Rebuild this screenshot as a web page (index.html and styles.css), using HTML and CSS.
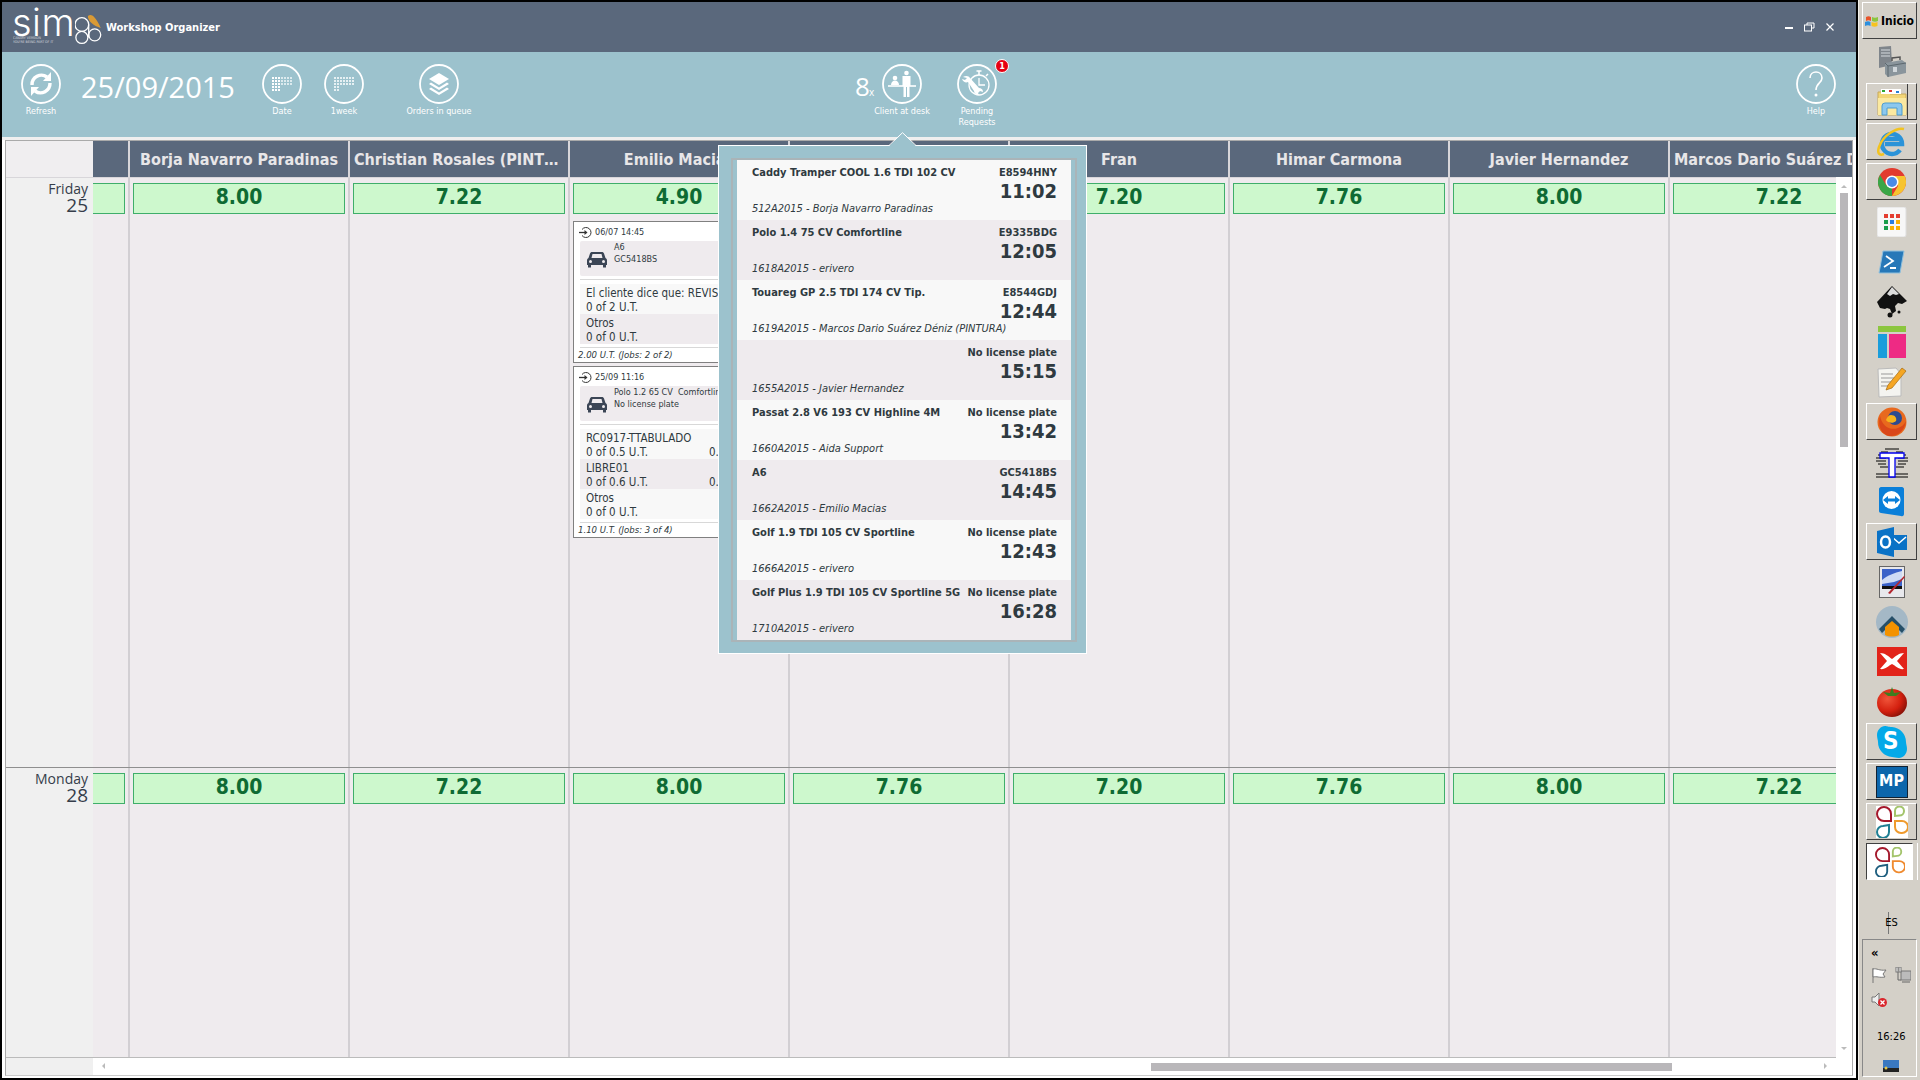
FILE: index.html
```html
<!DOCTYPE html>
<html lang="en">
<head>
    <meta charset="UTF-8">
    <title>Workshop Organizer</title>
    <link rel="stylesheet" href="styles.css">
</head>
<body>

<div class="page">
    <div class="window">
        <header class="titlebar">
            <div class="logo">
                <span class="logo-word">sim</span>
                <svg class="logo-mark" width="36" height="40" viewBox="0 0 36 40" fill="none" stroke="#fff" stroke-width="1.5">
                    <circle cx="8" cy="16" r="8"/>
                    <path d="M16 16v15"/>
                    <circle cx="8" cy="31" r="7"/>
                    <circle cx="23" cy="28" r="7"/>
                    <path d="M15 6c3-2 5-1 7 1 3 3 6 8 8 13-4-1-8-3-11-6-2-2-4-5-4-8z" fill="#d99a35" stroke="none"/>
                </svg>
                <span class="logo-small">CANARY VERSION<br>YOU'RE BEING PART OF IT</span>
            </div>
            <span class="app-name">Workshop Organizer</span>
            <div class="window-controls">
                <svg width="8" height="3" viewBox="0 0 8 3"><rect width="8" height="2" y="1" fill="#fff"/></svg>
                <svg width="11" height="10" viewBox="0 0 11 10" fill="none" stroke="#fff"><rect x="0.5" y="3" width="7" height="6"/><path d="M3 3V1h7v5H8" /></svg>
                <svg width="8" height="8" viewBox="0 0 8 8" stroke="#fff" stroke-width="1.2"><path d="M0.5 0.5l7 7M7.5 0.5l-7 7"/></svg>
            </div>
        </header>

        <div class="toolbar">
            <div class="tool tool-refresh">
                <svg class="tool-icon" viewBox="0 0 40 40" fill="none" stroke="#fff">
                    <circle cx="20" cy="20" r="19" stroke-width="1.8"/>
                    <path d="M11 21a9.5 9.5 0 0 1 15-8" stroke-width="3.4"/>
                    <path d="M29 19a9.5 9.5 0 0 1-15 8" stroke-width="3.4"/>
                    <path d="M30 8v9h-8z" fill="#fff" stroke="none"/>
                    <path d="M10 32v-9h8z" fill="#fff" stroke="none"/>
                </svg>
                <span class="tool-label">Refresh</span>
            </div>
            <div class="date-text">25/09/2015</div>
            <div class="tool tool-date">
                <svg class="tool-icon" viewBox="0 0 40 40" fill="none">
                    <defs>
                        <pattern id="dots" width="3" height="3" patternUnits="userSpaceOnUse" x="10" y="13">
                            <rect width="2" height="2" fill="#fff"/>
                        </pattern>
                    </defs>
                    <circle cx="20" cy="20" r="19" stroke="#fff" stroke-width="1.8"/>
                    <rect x="10" y="13" width="21" height="9" fill="url(#dots)"/>
                    <rect x="10" y="22" width="9" height="5" fill="url(#dots)"/>
                    <rect x="19" y="13" width="12" height="9" fill="#9cc2cd" opacity="0.35"/>
                </svg>
                <span class="tool-label">Date</span>
            </div>
            <div class="tool tool-date">
                <svg class="tool-icon" viewBox="0 0 40 40" fill="none">
                    <circle cx="20" cy="20" r="19" stroke="#fff" stroke-width="1.8"/>
                    <rect x="10" y="13" width="21" height="9" fill="url(#dots)" opacity="0.75"/>
                    <rect x="10" y="22" width="6" height="5" fill="url(#dots)" opacity="0.75"/>
                </svg>
                <span class="tool-label">1week</span>
            </div>
            <div class="tool tool-orders">
                <svg class="tool-icon" viewBox="0 0 40 40" fill="none">
                    <circle cx="20" cy="20" r="19" stroke="#fff" stroke-width="1.8"/>
                    <path d="M20 9l10 6-10 6-10-6z" fill="#fff"/>
                    <path d="M12 18.500l8 5 8-5 2 1.500-10 6-10-6z" fill="#fff"/>
                    <path d="M12 23.500l8 5 8-5 2 1.500-10 6-10-6z" fill="#fff"/>
                </svg>
                <span class="tool-label">Orders in queue</span>
            </div>
            <div class="client-count">8<small>x</small></div>
            <div class="tool tool-client">
                <svg class="tool-icon" viewBox="0 0 40 40" fill="none">
                    <circle cx="20" cy="20" r="19" stroke="#fff" stroke-width="1.8"/>
                    <circle cx="24.500" cy="9" r="2.300" fill="#fff"/>
                    <path d="M20.500 12h8v10h-1v11h-2.500v-10h-1v10h-2.500v-11h-1z" fill="#fff"/>
                    <circle cx="13" cy="14" r="2.300" fill="#fff"/>
                    <path d="M9 21c0-3 2-4.500 4-4.500s4 1.500 4 4.500z" fill="#fff"/>
                    <path d="M6 22h28" stroke="#fff" stroke-width="1.600"/>
                </svg>
                <span class="tool-label">Client at desk</span>
            </div>
            <div class="tool tool-pending">
                <svg class="tool-icon" viewBox="0 0 40 40" fill="none" stroke="#fff">
                    <circle cx="20" cy="20" r="19" stroke-width="1.8"/>
                    <circle cx="22" cy="21" r="10" stroke-width="1.300"/>
                    <path d="M22 7v4M19.500 7h5M31 10l-2 2" stroke-width="1.500"/>
                    <path d="M22 14v7h6" stroke-width="1.300"/>
                    <path d="M6 13c3-2 6-1 7 1l9 10c2 0 4 1 4 4l-3-1-2 2 1 2c-3 0-5-2-5-4L11 18c-2 1-5 0-6-3l3 1 2-2z" fill="#fff" stroke="none"/>
                </svg>
                <span class="tool-label">Pending<br>Requests</span>
                <span class="badge">1</span>
            </div>
            <div class="tool tool-help">
                <svg class="tool-icon" viewBox="0 0 40 40" fill="none" stroke="#fff">
                    <circle cx="20" cy="20" r="19" stroke-width="1.8"/>
                    <path d="M14 14c0-4 3-6 6-6s6 2 6 6c0 5-6 5-6 12" stroke-width="1.600"/>
                    <circle cx="20" cy="31" r="1.500" fill="#fff" stroke="none"/>
                </svg>
                <span class="tool-label">Help</span>
            </div>
        </div>

        <div class="panel">
            <div class="grid">
                <div class="grid-head">
                    <div class="corner"></div>
                    <div class="head-stub"></div>
                    <div class="head-cell">Borja Navarro Paradinas</div>
                    <div class="head-cell">Christian Rosales (PINTURA)</div>
                    <div class="head-cell">Emilio Macias</div>
                    <div class="head-cell">Aida Support</div>
                    <div class="head-cell">Fran</div>
                    <div class="head-cell">Himar Carmona</div>
                    <div class="head-cell">Javier Hernandez</div>
                    <div class="head-cell">Marcos Dario Suárez Déniz (PINTURA)</div>
                </div>

                <div class="grid-main">
                    <div class="days">
                        <div class="day-row day-first">
                            <div class="day-label"><span class="day-name">Friday</span><span class="day-num">25</span></div>
                            <div class="col col-stub"><div class="hours"></div></div>
                            <div class="col"><div class="hours">8.00</div></div>
                            <div class="col"><div class="hours">7.22</div></div>
                            <div class="col">
                                <div class="hours">4.90</div>

                                <div class="card">
                                    <div class="card-head">
                                        <svg width="13" height="13" viewBox="0 0 13 13" fill="none" stroke="#333"><path d="M3 3.500a5 5 0 1 1 0 6"/><path d="M0 6.500h7.500" stroke-width="1.300"/><path d="M5.500 4l3 2.500-3 2.500z" fill="#333" stroke="none"/></svg>
                                        <span>06/07 14:45</span>
                                        <span class="card-clock"></span>
                                    </div>
                                    <div class="card-car">
                                        <svg class="car-icon" width="20" height="17" viewBox="0 0 20 17"><path d="M5 1h10c1 0 1.500.5 2 1.500L18.500 7c1 .5 1.500 1.500 1.500 2.500V14h-1v2.500h-3V14H4v2.500H1V14H0V9.500C0 8.500.5 7.500 1.500 7L3 2.500C3.500 1.500 4 1 5 1z" fill="#3b4555"/><path d="M4.500 7l1-4h9l1 4z" fill="#efebee"/><circle cx="3.500" cy="10.500" r="1.500" fill="#efebee"/><circle cx="16.500" cy="10.500" r="1.500" fill="#efebee"/></svg>
                                        <div class="car-text">A6<br>GC5418BS</div>
                                    </div>
                                    <div class="card-jobs">
                                        <div class="job">El cliente dice que: REVISAR<br>0 of 2 U.T.</div>
                                        <div class="job job-alt">Otros<br>0 of 0 U.T.</div>
                                    </div>
                                    <div class="card-foot">2.00 U.T. (Jobs: 2 of 2)</div>
                                </div>

                                <div class="card">
                                    <div class="card-head">
                                        <svg width="13" height="13" viewBox="0 0 13 13" fill="none" stroke="#333"><path d="M3 3.500a5 5 0 1 1 0 6"/><path d="M0 6.500h7.500" stroke-width="1.300"/><path d="M5.500 4l3 2.500-3 2.500z" fill="#333" stroke="none"/></svg>
                                        <span>25/09 11:16</span>
                                        <span class="card-clock"></span>
                                    </div>
                                    <div class="card-car">
                                        <svg class="car-icon" width="20" height="17" viewBox="0 0 20 17"><path d="M5 1h10c1 0 1.500.5 2 1.500L18.500 7c1 .5 1.500 1.500 1.500 2.500V14h-1v2.500h-3V14H4v2.500H1V14H0V9.500C0 8.500.5 7.500 1.500 7L3 2.500C3.500 1.500 4 1 5 1z" fill="#3b4555"/><path d="M4.500 7l1-4h9l1 4z" fill="#efebee"/><circle cx="3.500" cy="10.500" r="1.500" fill="#efebee"/><circle cx="16.500" cy="10.500" r="1.500" fill="#efebee"/></svg>
                                        <div class="car-text">Polo 1.2 65 CV&nbsp; Comfortline<br>No license plate</div>
                                    </div>
                                    <div class="card-jobs">
                                        <div class="job">RC0917-TTABULADO<br><span class="job-line">0 of 0.5 U.T.<span class="job-right">0.50</span></span></div>
                                        <div class="job job-alt">LIBRE01<br><span class="job-line">0 of 0.6 U.T.<span class="job-right">0.60</span></span></div>
                                        <div class="job">Otros<br>0 of 0 U.T.</div>
                                    </div>
                                    <div class="card-foot">1.10 U.T. (Jobs: 3 of 4)</div>
                                </div>
                            </div>
                            <div class="col"><div class="hours">7.76</div></div>
                            <div class="col"><div class="hours">7.20</div></div>
                            <div class="col"><div class="hours">7.76</div></div>
                            <div class="col"><div class="hours">8.00</div></div>
                            <div class="col"><div class="hours">7.22</div></div>
                        </div>
                        <div class="day-row day-second">
                            <div class="day-label"><span class="day-name">Monday</span><span class="day-num">28</span></div>
                            <div class="col col-stub"><div class="hours"></div></div>
                            <div class="col"><div class="hours">8.00</div></div>
                            <div class="col"><div class="hours">7.22</div></div>
                            <div class="col"><div class="hours">8.00</div></div>
                            <div class="col"><div class="hours">7.76</div></div>
                            <div class="col"><div class="hours">7.20</div></div>
                            <div class="col"><div class="hours">7.76</div></div>
                            <div class="col"><div class="hours">8.00</div></div>
                            <div class="col"><div class="hours">7.22</div></div>
                        </div>
                    </div>
                    <div class="vscroll">
                        <span class="arrow-up"></span>
                        <div class="vscroll-thumb"></div>
                        <span class="arrow-down"></span>
                    </div>
                </div>

                <div class="hscroll">
                    <div class="hscroll-corner"></div>
                    <span class="arrow-left"></span>
                    <div class="hscroll-thumb"></div>
                    <span class="arrow-right"></span>
                </div>
            </div>
        </div>
    </div>

    <aside class="taskbar">
        <div class="start-btn">
            <svg width="14" height="14" viewBox="0 0 14 14"><path d="M1 3c2-1 3-1 5 0v4C4 6 3 6 1 7z" fill="#e8542a"/><path d="M7 3c2 1 4 1 6 0v4c-2 1-4 1-6 0z" fill="#8cc63f"/><path d="M0 8c2-1 4-1 5.500 0v4C4 11 2 11 0 12z" fill="#2d8fdd"/><path d="M6.500 8c2 1 4 1 6 0v4c-2 1-4 1-6 0z" fill="#f7c31e"/></svg>
            <span>Inicio</span>
        </div>

        <div class="tb-item">
            <svg width="30" height="32" viewBox="0 0 30 32"><path d="M2 1l12-1 1 19-13 3z" fill="#7f858b"/><path d="M4 4h9M4 7h9M4 10h9" stroke="#d6dade"/><path d="M8 17l17-3 4 3v10L11 31l-3-3z" fill="#8a959c"/><path d="M8 17l3 3 18-3M11 20v11" fill="none" stroke="#5d686f"/><path d="M15 15v-3l8-1v3" fill="none" stroke="#555" stroke-width="1.500"/><rect x="16" y="21" width="4" height="5" fill="#d0d6da"/></svg>
        </div>
        <div class="tb-item tb-raised tb-group">
            <svg width="30" height="29" viewBox="0 0 30 29"><path d="M1 5h10l2 2h16v21H1z" fill="#f3d677" stroke="#c8a95a"/><rect x="4" y="2" width="20" height="5" fill="#fff"/><rect x="5" y="3" width="3" height="2" fill="#2fa82f"/><rect x="12" y="3" width="3" height="2" fill="#d33"/><rect x="19" y="4" width="3" height="2" fill="#2b7fd6"/><path d="M1 11h28v17H1z" fill="#fbe9a0"/><path d="M5 28v-9a3 3 0 0 1 3-3h14a3 3 0 0 1 3 3v9h-5v-7h-10v7z" fill="#8cc8ee" stroke="#4f9dcf"/></svg>
        </div>
        <div class="tb-item tb-raised">
            <svg width="30" height="30" viewBox="0 0 30 30" fill="none"><path d="M8 17h17a10 10 0 1 0-2 6" stroke="#2b93d8" stroke-width="4.500"/><path d="M7 12h15" stroke="#2b93d8" stroke-width="4"/><path d="M27 2C20 0 6 8 2 20c-2 6 0 9 5 7" stroke="#f2c320" stroke-width="2.500"/></svg>
        </div>
        <div class="tb-item tb-raised">
            <svg width="28" height="28" viewBox="0 0 28 28"><circle cx="14" cy="14" r="14" fill="#e23b2e"/><path d="M14 14L1.900 21A14 14 0 0 0 14 28z" fill="#3aa648"/><path d="M1.900 21A14 14 0 0 1 2 7l6 10 6 11A14 14 0 0 1 1.900 21z" fill="#3aa648"/><path d="M14 8h12.700A14 14 0 0 1 14 28l6-10z" fill="#f7c42e"/><circle cx="14" cy="14" r="6.500" fill="#fff"/><circle cx="14" cy="14" r="5" fill="#4a8be8"/></svg>
        </div>
        <div class="tb-item">
            <svg width="30" height="30" viewBox="0 0 30 30"><rect width="29" height="30" rx="2" fill="#f7f7f7" stroke="#ddd"/><rect x="7" y="7" width="4" height="4" fill="#e43d30"/><rect x="13" y="7" width="4" height="4" fill="#e43d30"/><rect x="19" y="7" width="4" height="4" fill="#e43d30"/><rect x="7" y="13" width="4" height="4" fill="#1b9e4b"/><rect x="13" y="13" width="4" height="4" fill="#2a7de1"/><rect x="19" y="13" width="4" height="4" fill="#fbb003"/><rect x="7" y="19" width="4" height="4" fill="#1b9e4b"/><rect x="13" y="19" width="4" height="4" fill="#fbb003"/><rect x="19" y="19" width="4" height="4" fill="#fbb003"/></svg>
        </div>
        <div class="tb-item">
            <svg width="27" height="24" viewBox="0 0 27 24"><path d="M5 1h21l-4 22H1z" fill="#2778b8" stroke="#8fc0de"/><path d="M8 6l7 5-9 6M12 18h6" fill="none" stroke="#fff" stroke-width="1.800"/></svg>
        </div>
        <div class="tb-item">
            <svg width="30" height="32" viewBox="0 0 30 32"><path d="M15 0L30 15l-5 3-4-1-3 3 1 5-4 3-2-5-3-1-2 1-5-1-3-6z" fill="#111"/><path d="M15 1l7 7-3 1-3-1-3 2-3-2z" fill="#dcdcdc"/><circle cx="13" cy="29" r="2.500" fill="#111"/><circle cx="22" cy="26" r="1.500" fill="#111"/></svg>
        </div>
        <div class="tb-item">
            <svg width="28" height="32" viewBox="0 0 28 32"><rect width="28" height="6" fill="#8cc63f"/><rect y="8" width="9" height="24" fill="#1a9ddb"/><rect x="11" y="8" width="17" height="24" fill="#ee2a84"/></svg>
        </div>
        <div class="tb-item">
            <svg width="30" height="32" viewBox="0 0 30 32"><path d="M1 3l18-1 5 6v22L2 31z" fill="#f4f4f0" stroke="#bbb"/><path d="M4 8h12M4 12h14M4 16h10M4 20h8" stroke="#999"/><path d="M9 24l2-5L25 2l4 3-14 17z" fill="#f5a623" stroke="#a36a12" stroke-width=".7"/></svg>
        </div>
        <div class="tb-item tb-raised">
            <svg width="30" height="30" viewBox="0 0 30 30"><circle cx="15" cy="15" r="14.500" fill="#e8691e"/><circle cx="18" cy="11" r="7" fill="#2c4a8f"/><path d="M3 9c2 10 10 15 18 12 3-1 6-3 8-7-1 9-8 15-15 15C6 29 0 21 3 9z" fill="#d9471a"/><path d="M14 8c4 0 6 3 5 6-3 3-8 2-10-1 1-3 3-5 5-5z" fill="#f7b21b"/></svg>
        </div>
        <div class="tb-item">
            <svg width="32" height="32" viewBox="0 0 32 32" fill="none"><g stroke="#000"><path d="M9 3h14M5 6h7M20 6h7M2 9h8M22 9h8M0 12h10M22 12h10M0 15h10M22 15h10M2 18h8M22 18h8M4 21h8M20 21h8M0 28h32M0 31h32"/></g><path d="M4 7h24v5H19v19h-6V12H4z" fill="#fff" stroke="#0000ee" stroke-width="1.300"/></svg>
        </div>
        <div class="tb-item">
            <svg width="25" height="31" viewBox="0 0 25 31"><path d="M2 1h21c1 0 2 1 2 2v25c0 1-1 3-3 2L2 27c-1 0-2-1-2-2V3c0-1 1-2 2-2z" fill="#0a7fd9"/><circle cx="12.500" cy="14" r="9" fill="#fff"/><path d="M4 14l5-4v2.500h7V10l5 4-5 4v-2.500H9V18z" fill="#0a7fd9"/></svg>
        </div>
        <div class="tb-item tb-raised">
            <svg width="30" height="30" viewBox="0 0 30 30"><rect x="14" y="8" width="16" height="15" fill="#0a72c6"/><path d="M15 10l7 6 7-6" fill="none" stroke="#fff" stroke-width="1.500"/><path d="M0 4l17-4v30L0 26z" fill="#0a72c6"/><ellipse cx="8.500" cy="15" rx="4.500" ry="5.500" fill="none" stroke="#fff" stroke-width="2.500"/></svg>
        </div>
        <div class="tb-item">
            <svg width="26" height="32" viewBox="0 0 26 32"><rect x=".5" y=".5" width="25" height="31" fill="#e8e8ec" stroke="#666"/><rect x="3" y="3" width="20" height="17" fill="#3a62c8"/><path d="M3 14c6-5 12-7 20-9v8l-8 3-12 2z" fill="#cfdcf5"/><rect x="3" y="20" width="20" height="3" fill="#111"/><path d="M9 27L25 10l1 1-15 17z" fill="#b3262e"/></svg>
        </div>
        <div class="tb-item">
            <svg width="32" height="32" viewBox="0 0 32 32"><circle cx="16" cy="16" r="16" fill="#a4b8c6"/><path d="M3 23L16 10l13 13-3 4-10-10-10 10z" fill="#264f68"/><path d="M9 21l7-6 7 6v8c-4 2-10 2-14 0z" fill="#f39200"/></svg>
        </div>
        <div class="tb-item">
            <svg width="30" height="29" viewBox="0 0 30 29"><rect width="30" height="29" fill="#e2231a"/><path d="M3 6c5 0 8 3 12 6 4-3 7-6 12-6l-7 8 7 8c-5 1-8-3-12-5-4 2-7 6-12 5l7-8z" fill="#fff"/></svg>
        </div>
        <div class="tb-item">
            <svg width="30" height="31" viewBox="0 0 30 31"><defs><radialGradient id="tomato" cx="0.35" cy="0.35" r="0.75"><stop offset="0" stop-color="#f0553a"/><stop offset="0.6" stop-color="#d4200f"/><stop offset="1" stop-color="#7d0f06"/></radialGradient></defs><ellipse cx="15" cy="17" rx="15" ry="14" fill="url(#tomato)"/><path d="M6 6l7 1 2-6 2 6 7-1-5 4h-8z" fill="#3f7d1f"/></svg>
        </div>
        <div class="tb-item tb-raised">
            <svg width="30" height="32" viewBox="0 0 30 32"><path d="M8 0c2 0 3 1 7 1a15 15 0 0 1 14 15c0 2 1 4 1 7 0 5-4 9-8 9-3 0-5-1-7-1A15 15 0 0 1 1 16c0-2-1-4-1-7 0-5 4-9 8-9z" fill="#03a9e8"/></svg>
            <span class="skype-s">S</span>
        </div>
        <div class="tb-item tb-raised">
            <div class="mp-tile">MP</div>
        </div>
        <div class="tb-item tb-raised">
            <div class="petal-tile">
                <svg width="32" height="32" viewBox="0 0 32 32" fill="none" stroke-width="2"><path d="M15 15H8a7 7 0 1 1 7-7z" stroke="#a4182b"/><path d="M19 10V5a4.500 4.500 0 1 1 4.500 4.500z" stroke="#a3c46b"/><path d="M13 19v7a6 6 0 1 1-6-6z" stroke="#1f7f93"/><path d="M19 15h7a6 6 0 0 1 0 12h-1a6 6 0 0 1-6-6z" stroke="#ef9b2e"/></svg>
            </div>
        </div>
        <div class="tb-item tb-pressed">
            <svg width="30" height="30" viewBox="0 0 32 32" fill="none" stroke-width="2"><path d="M15 15H8a7 7 0 1 1 7-7z" stroke="#a4182b"/><path d="M19 10V5a4.500 4.500 0 1 1 4.500 4.500z" stroke="#a3c46b"/><path d="M13 19v7a6 6 0 1 1-6-6z" stroke="#1f5f7f"/><path d="M19 15h7a6 6 0 0 1 0 12h-1a6 6 0 0 1-6-6z" stroke="#ef8a2e"/></svg>
        </div>

        <div class="lang">
            <span class="lang-text">ES</span>
        </div>

        <div class="tray">
            <span class="tray-more">«</span>
            <div class="tray-icons">
                <svg width="16" height="16" viewBox="0 0 16 16" fill="#fff" stroke="#777"><path d="M2 1v15" fill="none"/><path d="M2 2c4-1 6 2 13 1l-3 4 2 3c-6 1-8-1-12 0z"/></svg>
                <svg width="16" height="16" viewBox="0 0 16 16"><rect x="6" y="4" width="10" height="9" fill="#bbb" stroke="#777"/><rect x="1" y="0" width="2" height="5" fill="#fff" stroke="#777"/><rect x="4" y="0" width="2" height="5" fill="#fff" stroke="#777"/><path d="M3 5v8h3M7 15h8" fill="none" stroke="#666"/></svg>
            </div>
            <svg class="tray-sound" width="17" height="16" viewBox="0 0 17 16"><path d="M1 5h3l4-4v13L4 10H1z" fill="#eee" stroke="#777"/><circle cx="11.500" cy="10.500" r="4.500" fill="#d9262c"/><path d="M9.500 8.500l4 4M13.500 8.500l-4 4" stroke="#fff" stroke-width="1.300"/></svg>
            <span class="tray-clock">16:26</span>
            <svg class="tray-desktop" width="16" height="12" viewBox="0 0 16 12"><rect width="16" height="12" fill="#3a78c0"/><rect y="8" width="16" height="4" fill="#222"/><circle cx="3" cy="8" r="1.500" fill="#e6c84a"/></svg>
        </div>
    </aside>

    <div class="popup">
        <svg class="popup-arrow" width="27" height="14" viewBox="0 0 27 14"><path d="M0 14L13.500 1 27 14z" fill="#9cc2cd"/><path d="M0 13.500L13.500.7 27 13.500" fill="none" stroke="#fff"/></svg>
        <div class="queue">
            <div class="q-row">
                <div class="q-top"><span>Caddy Tramper COOL 1.6 TDI 102 CV</span><span>E8594HNY</span></div>
                <div class="q-time">11:02</div>
                <div class="q-foot">512A2015 - Borja Navarro Paradinas</div>
            </div>
            <div class="q-row">
                <div class="q-top"><span>Polo 1.4 75 CV Comfortline</span><span>E9335BDG</span></div>
                <div class="q-time">12:05</div>
                <div class="q-foot">1618A2015 - erivero</div>
            </div>
            <div class="q-row">
                <div class="q-top"><span>Touareg GP 2.5 TDI 174 CV Tip.</span><span>E8544GDJ</span></div>
                <div class="q-time">12:44</div>
                <div class="q-foot">1619A2015 - Marcos Dario Suárez Déniz (PINTURA)</div>
            </div>
            <div class="q-row">
                <div class="q-top"><span></span><span>No license plate</span></div>
                <div class="q-time">15:15</div>
                <div class="q-foot">1655A2015 - Javier Hernandez</div>
            </div>
            <div class="q-row">
                <div class="q-top"><span>Passat 2.8 V6 193 CV Highline 4M</span><span>No license plate</span></div>
                <div class="q-time">13:42</div>
                <div class="q-foot">1660A2015 - Aida Support</div>
            </div>
            <div class="q-row">
                <div class="q-top"><span>A6</span><span>GC5418BS</span></div>
                <div class="q-time">14:45</div>
                <div class="q-foot">1662A2015 - Emilio Macias</div>
            </div>
            <div class="q-row">
                <div class="q-top"><span>Golf 1.9 TDI 105 CV Sportline</span><span>No license plate</span></div>
                <div class="q-time">12:43</div>
                <div class="q-foot">1666A2015 - erivero</div>
            </div>
            <div class="q-row">
                <div class="q-top"><span>Golf Plus 1.9 TDI 105 CV Sportline 5G</span><span>No license plate</span></div>
                <div class="q-time">16:28</div>
                <div class="q-foot">1710A2015 - erivero</div>
            </div>
        </div>
    </div>
</div>

</body>
</html>
```

FILE: styles.css
```css
/* Global */
* {
    box-sizing: border-box;
}

body {
    margin: 0;
    background: #000;
    font-family: "DejaVu Sans Condensed", "DejaVu Sans", sans-serif;
    color: #2f3a40;
    overflow: hidden;
}

.page {
    position: relative;
    display: flex;
    width: 1920px;
    height: 1080px;
    overflow: hidden;
}

/* Main window */
.window {
    display: flex;
    flex-direction: column;
    width: 1854px;
    height: 1076px;
    margin: 2px 2px 2px 2px;
    background: #fff;
}

.titlebar {
    display: flex;
    align-items: center;
    flex: 0 0 50px;
    padding-left: 10px;
    background: #5a687c;
    color: #fff;
}

.logo {
    position: relative;
    display: flex;
    flex: none;
    width: 94px;
    height: 50px;
}

.logo-word {
    flex: 0 0 58px;
    height: 32px;
    margin-top: 4px;
    font-family: Inter, sans-serif;
    font-weight: 300;
    font-size: 38px;
    letter-spacing: 0.5px;
    line-height: 32px;
}

.logo-mark {
    margin-top: 6px;
}

.logo-small {
    position: absolute;
    left: 1px;
    top: 34px;
    font-size: 3.5px;
    line-height: 4px;
    opacity: 0.7;
}

.app-name {
    font-weight: bold;
    font-size: 11px;
}

.window-controls {
    display: flex;
    align-items: center;
    gap: 11px;
    margin-left: auto;
    margin-right: 22px;
}

/* Toolbar */
.toolbar {
    display: flex;
    flex: 0 0 85px;
    padding-top: 12px;
    background: #9cc2cd;
    color: #fff;
}

.tool {
    position: relative;
    display: flex;
    flex-direction: column;
    align-items: center;
    flex: none;
}

.tool-icon {
    width: 40px;
    height: 40px;
    margin-bottom: 2px;
}

.tool-label {
    font-size: 9px;
    line-height: 11px;
    text-align: center;
    white-space: nowrap;
}

.tool-refresh {
    width: 60px;
    margin-left: 9px;
}

.date-text {
    width: 170px;
    margin-left: 10px;
    padding-top: 4px;
    font-family: "Open Sans", sans-serif;
    font-size: 29px;
    line-height: 38px;
}

.tool-date {
    width: 62px;
}

.tool-orders {
    width: 80px;
    margin-left: 24px;
}

.client-count {
    width: 20px;
    margin-left: 376px;
    padding-top: 7px;
    font-family: "Open Sans", sans-serif;
    font-size: 26px;
    line-height: 30px;
    white-space: nowrap;
}

.client-count small {
    margin-left: -1px;
    font-size: 10px;
}

.tool-client {
    width: 54px;
}

.tool-pending {
    width: 60px;
    margin-left: 18px;
}

.badge {
    position: absolute;
    left: 48px;
    top: -5px;
    width: 14px;
    height: 14px;
    border: 1px solid #fff;
    border-radius: 50%;
    background: #e60012;
    font-weight: bold;
    font-size: 9px;
    line-height: 12px;
    text-align: center;
}

.tool-help {
    width: 40px;
    margin-left: auto;
    margin-right: 20px;
}

/* Grid */
.panel {
    flex: 1;
    min-height: 0;
    padding: 0 3px 2px;
    border-top: 3px solid #efefef;
}

.grid {
    display: flex;
    flex-direction: column;
    height: 100%;
    border: 1px solid #aaa;
    border-bottom-color: #ccc;
    background: #fff;
}

.grid-head {
    display: flex;
    flex: 0 0 36px;
    overflow: hidden;
    background: #5a687c;
}

.corner {
    flex: 0 0 87px;
    background: #f0eef0;
}

.head-stub {
    flex: 0 0 37px;
    border-right: 2px solid #d8d6da;
}

.head-cell {
    flex: 0 0 220px;
    overflow: hidden;
    padding: 0 4px;
    border-right: 2px solid #d8d6da;
    color: #e8e6e8;
    font-weight: bold;
    font-size: 16px;
    line-height: 38px;
    text-align: center;
    white-space: nowrap;
    text-overflow: ellipsis;
}

.head-cell:last-child {
    text-overflow: clip;
}

.grid-main {
    display: flex;
    flex: 0 0 881px;
    min-height: 0;
}

.days {
    display: flex;
    flex-direction: column;
    width: 1830px;
    overflow: hidden;
    border-bottom: 1px solid #bbb;
    border-top: 1px solid #d8d6da;
}

.day-row {
    display: flex;
    flex: none;
    background: #efebee;
}

.day-first {
    height: 590px;
    border-bottom: 1px solid #8f8f8f;
}

.day-second {
    flex: 1;
}

.day-label {
    display: flex;
    flex-direction: column;
    align-items: flex-end;
    flex: 0 0 87px;
    padding: 3px 5px 0 0;
    background: #f0f0f0;
    color: #353d4a;
    font-family: "Open Sans", sans-serif;
}

.day-name {
    font-size: 14px;
    line-height: 16px;
}

.day-num {
    font-size: 19px;
    line-height: 17px;
}

.col {
    flex: 0 0 220px;
    padding: 5px 3px 0;
    border-right: 2px solid #d2cfd3;
}

.col-stub {
    flex: 0 0 37px;
    padding-left: 0;
}

.hours {
    height: 31px;
    border: 1px solid #3fae6a;
    background: #cdf8cd;
    color: #0e6b33;
    font-weight: bold;
    font-size: 21px;
    line-height: 26px;
    text-align: center;
}

.col-stub .hours {
    border-left: 0;
}

/* Work order cards */
.card {
    margin-top: 3px;
    padding: 0 6px;
    border: 1px solid #808080;
    background: #fff;
}

.hours + .card {
    margin-top: 7px;
}

.card-head {
    display: flex;
    align-items: center;
    gap: 3px;
    height: 19px;
    margin-left: -1px;
    padding-top: 1px;
    font-size: 9px;
    white-space: nowrap;
}

.card-clock {
    width: 12px;
    height: 12px;
    margin-left: auto;
    border: 1px solid #333;
    border-radius: 50%;
}

.card-car {
    display: flex;
    height: 35px;
    border-radius: 2px;
    background: #efebee;
}

.car-icon {
    flex: none;
    margin: 10px 7px 0 7px;
}

.car-text {
    font-size: 9px;
    line-height: 12px;
    white-space: nowrap;
}

.card-jobs {
    margin-top: 3px;
    padding: 4px 0 3px;
    border-top: 1px solid #d8d8d8;
    border-bottom: 1px solid #d8d8d8;
}

.job {
    height: 30px;
    padding: 2px 0 0 6px;
    background: #f8f8f8;
    font-size: 11.5px;
    line-height: 14px;
    white-space: nowrap;
    overflow: hidden;
}

.job-alt {
    background: #efebee;
}

.job-line {
    display: flex;
}

.job-right {
    margin-left: 61px;
}

.card-foot {
    margin-left: -2px;
    font-style: italic;
    font-size: 9.5px;
    line-height: 14px;
    white-space: nowrap;
}

/* Scrollbars */
.vscroll {
    position: relative;
    flex: 0 0 16px;
    background: #fff;
}

.vscroll-thumb {
    width: 8px;
    height: 254px;
    margin: 16px 0 0 4px;
    background: #b9b7ba;
}

.arrow-up,
.arrow-down,
.arrow-left,
.arrow-right {
    position: absolute;
    width: 0;
    height: 0;
    border: 3px solid transparent;
}

.arrow-up {
    left: 5px;
    top: 5px;
    border-bottom-color: #bbb;
}

.arrow-down {
    left: 5px;
    bottom: 5px;
    border-top-color: #bbb;
}

.hscroll {
    position: relative;
    display: flex;
    flex: 1;
    align-items: center;
}

.hscroll-corner {
    flex: 0 0 87px;
    align-self: stretch;
    background: #f0f0f0;
}

.hscroll-thumb {
    width: 521px;
    height: 8px;
    margin-left: 1058px;
    background: #b9b7ba;
}

.arrow-left {
    left: 93px;
    top: 5px;
    border-right-color: #bbb;
}

.arrow-right {
    left: 1818px;
    top: 5px;
    border-left-color: #bbb;
}

/* Queue popup */
.popup {
    position: absolute;
    left: 718px;
    top: 145px;
    width: 369px;
    height: 509px;
    padding: 12px 9px 0 12px;
    border: 1px solid #fff;
    background: #9cc2cd;
}

.popup-arrow {
    position: absolute;
    left: 170px;
    top: -14px;
}

.queue {
    padding: 0 4px 0 4px;
    border: 2px solid #aab4b8;
}

.q-row {
    height: 60px;
    padding: 5px 14px 0 15px;
    background: #f8f8f8;
}

.q-row:nth-child(even) {
    background: #efebee;
}

.q-top {
    display: flex;
    justify-content: space-between;
    font-weight: bold;
    font-size: 11px;
    line-height: 15px;
    white-space: nowrap;
}

.q-time {
    font-weight: bold;
    font-size: 20px;
    line-height: 22px;
    text-align: right;
}

.q-foot {
    font-style: italic;
    font-size: 11px;
    line-height: 14px;
}

/* Taskbar */
.taskbar {
    display: flex;
    flex-direction: column;
    flex: 0 0 62px;
    height: 1080px;
    padding: 2px 3px 0 7px;
    border-left: 1px solid #f2f0ea;
    background: #d4d0c8;
}

.start-btn {
    display: flex;
    align-items: center;
    gap: 2px;
    height: 37px;
    margin: 0 0 4px -4px;
    padding-left: 2px;
    border: 1px solid;
    border-color: #fff #404040 #404040 #fff;
    color: #000;
    font-weight: bold;
    font-size: 12px;
}

.tb-item {
    position: relative;
    display: flex;
    align-items: center;
    justify-content: center;
    flex: none;
    width: 51px;
    height: 37px;
    margin-bottom: 3px;
}

.tb-raised {
    border: 1px solid;
    border-color: #fff #404040 #404040 #fff;
}

.tb-group {
    box-shadow: inset -8px 0 0 #d4d0c8, inset -9px 0 0 #404040;
}

.tb-pressed {
    border: 1px solid;
    border-color: #404040 #fff #fff #404040;
    background: #fff;
    box-shadow: 4px 0 0 #d4d0c8, 5px 0 0 #fff;
    width: 47px;
    margin-right: 4px;
}

.skype-s {
    position: absolute;
    left: 16px;
    top: 2px;
    color: #fff;
    font-weight: bold;
    font-size: 24px;
    line-height: 30px;
}

.mp-tile {
    width: 32px;
    height: 32px;
    border: 1px solid #123;
    background: #0c66ab;
    color: #fff;
    font-weight: bold;
    font-size: 16px;
    line-height: 28px;
    text-align: center;
}

.petal-tile {
    display: flex;
    background: #fff;
}

.lang {
    height: 22px;
    margin-top: 29px;
    color: #000;
    text-align: center;
}

.lang-text {
    display: block;
    width: 51px;
    font-size: 11px;
    line-height: 22px;
    background: linear-gradient(#777, #777) no-repeat 22px 0 / 1px 100%;
}

.tray {
    display: flex;
    flex-direction: column;
    width: 55px;
    height: 138px;
    margin: 5px 0 0 -4px;
    padding: 5px 0 0 8px;
    border: 1px solid #888;
    border-right-color: #fff;
    border-bottom-color: #fff;
    color: #000;
}

.tray-more {
    height: 16px;
    font-weight: bold;
    font-size: 13px;
    line-height: 16px;
}

.tray-icons {
    display: flex;
    gap: 8px;
    margin-top: 6px;
}

.tray-sound {
    margin: 9px 0 0 0;
}

.tray-clock {
    margin-top: 22px;
    padding-left: 6px;
    font-size: 11px;
    line-height: 14px;
}

.tray-desktop {
    margin: 16px 0 0 12px;
}
```
